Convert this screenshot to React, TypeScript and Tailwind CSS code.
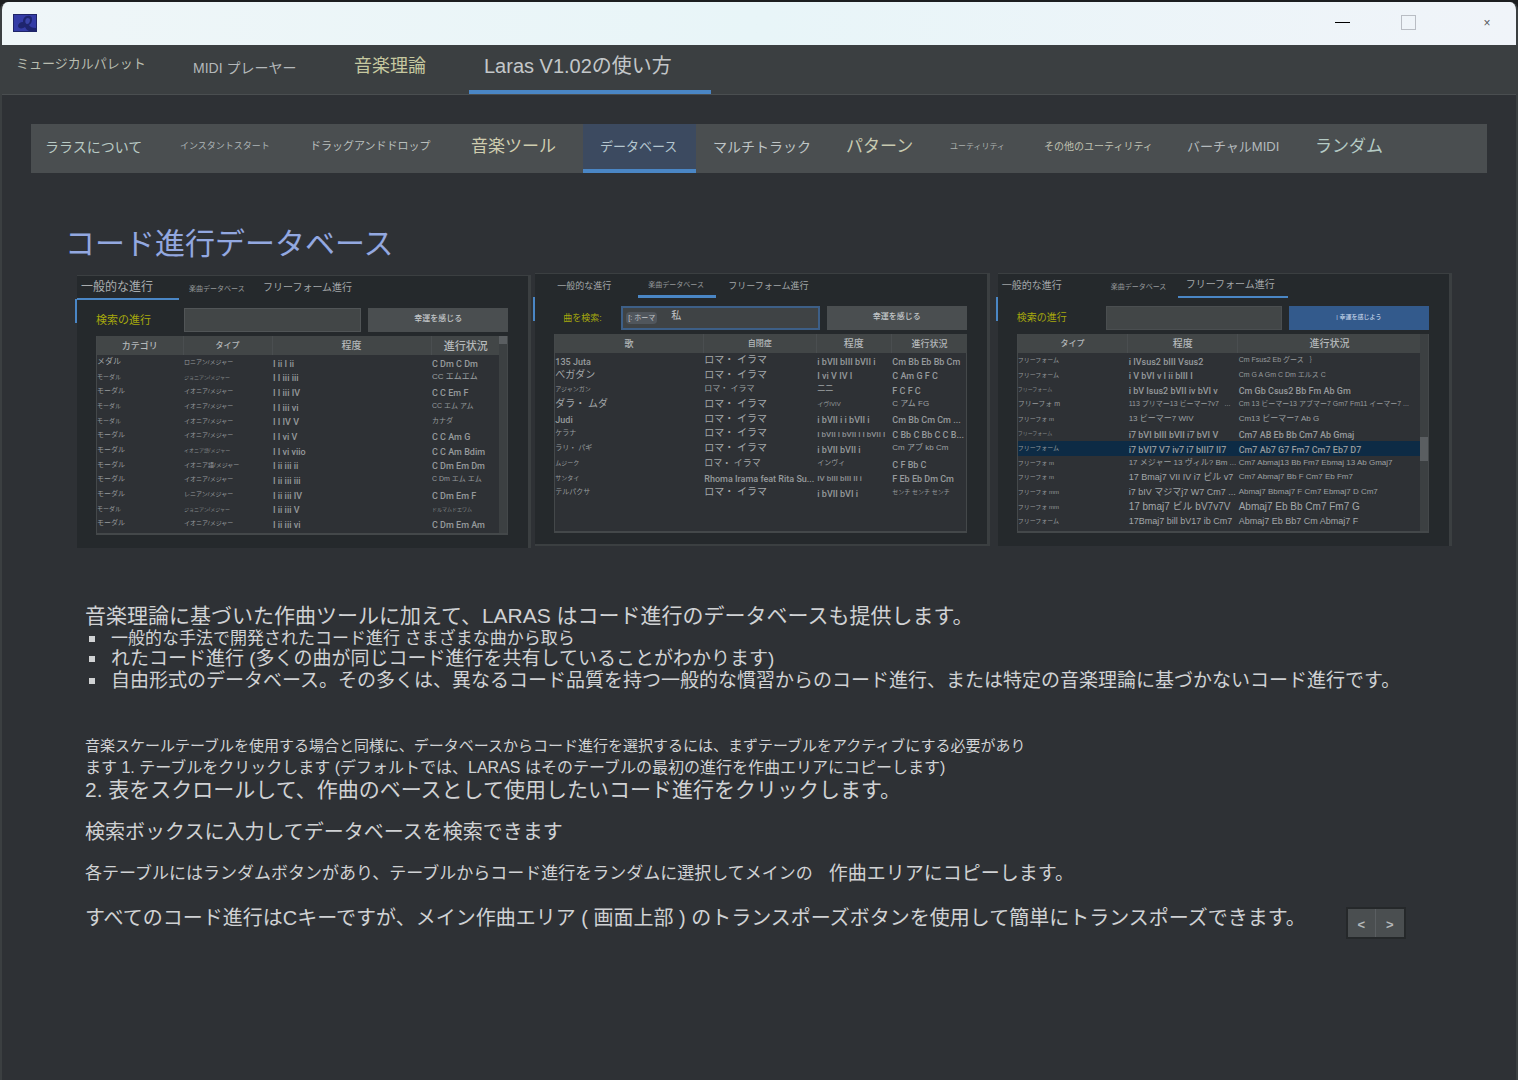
import type { ReactNode } from 'react';

type Cell = { text: string; cls: string };
type Row = Cell[];

const mainTabs = [
  { label: 'ミュージカルパレット', cls: 'w-[177px] pb-3 text-[13px] text-[#b9bdb0]' },
  { label: 'MIDI プレーヤー', cls: 'w-[161px] pb-1 text-[14px] text-[#b4b8ba]' },
  { label: '音楽理論', cls: 'w-[115px] pb-2 text-[18px] text-[#c6c8a0]' },
  { label: 'Laras V1.02の使い方', cls: 'w-[242px] pb-1 text-[20px] text-[#c3c7c9] border-b-4 border-[#4a86c5]', active: true },
];

const helpTabs = [
  { label: 'ララスについて', cls: 'w-[135px] text-[14px] text-[#b9cbc5]' },
  { label: 'インスタントスタート', cls: 'w-[130px] text-[9px] text-[#aeb6b8]' },
  { label: 'ドラッグアンドドロップ', cls: 'w-[161px] text-[11px] text-[#b9bfbd]' },
  { label: '音楽ツール', cls: 'w-[126px] text-[17px] text-[#cfcdaf]' },
  { label: 'データベース', cls: 'w-[113px] pl-[17px] text-[13px] text-[#b4c6cf] bg-[#3c4a60] border-b-4 border-[#4a86c5]', active: true },
  { label: 'マルチトラック', cls: 'w-[136px] pl-[17px] text-[14px] text-[#bfc5c6]' },
  { label: 'パターン', cls: 'w-[104px] text-[17px] text-[#c8cab0]' },
  { label: 'ユーティリティ', cls: 'w-[94px] text-[8px] text-[#aab0ae]' },
  { label: 'その他のユーティリティ', cls: 'w-[143px] text-[10px] text-[#c0c2b2]' },
  { label: 'バーチャルMIDI', cls: 'w-[128px] text-[13px] text-[#b4babd]' },
  { label: 'ランダム', cls: 'w-[95px] text-[17px] text-[#b5cbc5]' },
];

const j5 = (text: string): Cell => ({ text, cls: 'align-top leading-[14px] text-[5px] text-[#85898b]' });
const j6 = (text: string): Cell => ({ text, cls: 'align-top leading-[14px] text-[6px] text-[#979b9d]' });
const j7 = (text: string): Cell => ({ text, cls: 'align-top leading-[14px] text-[7px] text-[#989c9e]' });
const j8 = (text: string): Cell => ({ text, cls: 'align-top leading-[14px] text-[8px] text-[#9ea2a4]' });
const j9 = (text: string): Cell => ({ text, cls: 'align-top leading-[14px] text-[9px] text-[#a3a7a9]' });
const j10 = (text: string): Cell => ({ text, cls: 'align-top leading-[14px] text-[10px] text-[#a3a7a9]' });
// chord names and degrees
const ch = (text: string): Cell => ({ text, cls: 'align-bottom leading-[12px] font-[Roboto] font-medium text-[9px] text-[#969a9c]' });
const dg = (text: string): Cell => ({ text, cls: 'align-bottom leading-[12px] font-[Roboto] font-medium text-[8px] text-[#8f9395]' });

const commonRows: Row[] = [
  [j8('メダル'), j6('ロニアン/メジャー'), ch('I ii I ii'), ch('C Dm C Dm')],
  [j6('モーダル'), j5('ジョニアン/メジャー'), ch('I I iii iii'), j8('CC エムエム')],
  [j7('モーダル'), j6('イオニア/メジャー'), ch('I I iii IV'), ch('C C Em F')],
  [j6('モーダル'), j6('イオニア/メジャー'), ch('I I iii vi'), j7('CC エム アム')],
  [j6('モーダル'), j6('イオニア/メジャー'), ch('I I IV V'), j7('カナダ')],
  [j7('モーダル'), j6('イオニア/メジャー'), ch('I I vi V'), ch('C C Am G')],
  [j7('モーダル'), j5('イオニア語/メジャー'), ch('I I vi viio'), ch('C C Am Bdim')],
  [j7('モーダル'), j6('イオニア語/メジャー'), ch('I ii iii ii'), ch('C Dm Em Dm')],
  [j7('モーダル'), j6('イオニア/メジャー'), ch('I ii iii iii'), j7('C Dm エム エム')],
  [j7('モーダル'), j6('レニアン/メジャー'), ch('I ii iii IV'), ch('C Dm Em F')],
  [j6('モーダル'), j5('ジョニアン/メジャー'), ch('I ii iii V'), j5('ドルマムドエワム')],
  [j7('モーダル'), j6('イオニア/メジャー'), ch('I ii iii vi'), ch('C Dm Em Am')],
];

const songRows: Row[] = [
  [ch('135 Juta'), j10('ロマ・ イラマ'), ch('i bVII bIII bVII i'), ch('Cm Bb Eb Bb Cm')],
  [j10('べガダン'), j10('ロマ・ イラマ'), ch('I vi V IV I'), ch('C Am G F C')],
  [j6('アジャンガン'), j8('ロマ・ イラマ'), j8('二二'), ch('F C F C')],
  [j10('ダラ・ ムダ'), j10('ロマ・ イラマ'), j6('イヴIVIV'), j8('C アム FG')],
  [ch('Judi'), j10('ロマ・ イラマ'), ch('i bVII i i bVII i'), ch('Cm Bb Cm Cm ...')],
  [j7('ケラナ'), j10('ロマ・ イラマ'), dg('I bVII I bVII I I bVII I'), ch('C Bb C Bb C C B...')],
  [j7('ラリ・ パギ'), j10('ロマ・ イラマ'), ch('i bVII bVII i'), j8('Cm アブ kb Cm')],
  [j6('ムジーク'), j9('ロマ・ イラマ'), j7('インヴィ'), ch('C F Bb C')],
  [j6('サンタイ'), ch('Rhoma Irama feat Rita Su...'), dg('IV bIII bIII II i'), ch('F Eb Eb Dm Cm')],
  [j7('テルパクサ'), j10('ロマ・ イラマ'), ch('i bVII bVI i'), j6('センチ センチ センチ')],
];

const freeRows: Row[] = [
  [j6('フリーフォーム'), ch('i IVsus2 bIII Vsus2'), j7('Cm Fsus2 Eb グース   ｝')],
  [j6('フリーフォーム'), ch('i V bVI v I ii bIII I'), j7('Cm G A Gm C Dm エルス C')],
  [j5('フリーフォーム'), ch('i bV Isus2 bVII iv bVI v'), ch('Cm Gb Csus2 Bb Fm Ab Gm')],
  [j7('フリーフォ m'), j7('113 プリマー13 ビーマー7v7   ...'), j7('Cm 13 ビーマー13 アブマー7 Gm7 Fm11 イーマー7 ...')],
  [j6('フリーフォ m'), j8('13 ビーマー7 WIV'), j8('Cm13 ビーマー7 Ab G')],
  [j5('フリーフォーム'), ch('i7 bVI bIII bVII i7 bVI V'), ch('Cm7 AB Eb Bb Cm7 Ab Gmaj')],
  [j6('フリーフォーム'), ch('i7 bVI7 V7 iv7 i7 bIII7 II7'), ch('Cm7 Ab7 G7 Fm7 Cm7 Eb7 D7')],
  [j6('フリーフォ m'), j8('17 メジャー 13 ヴィル? Bm ...'), j8('Cm7 Abmaj13 Bb Fm7 Ebmaj 13 Ab Gmaj7')],
  [j6('フリーフォ m'), j9('17 Bmaj7 VII IV i7 ビル v7'), j8('Cm7 Abmaj7 Bb F Cm7 Eb Fm7')],
  [j6('フリーフォ mm'), j9('i7 bIV マジマj7 W7 Cm7 ...'), j8('Abmaj7 Bbmaj7 F Cm7 Ebmaj7 D Cm7')],
  [j6('フリーフォ mm'), j10('17 bmaj7 ビル bV7v7V'), j10('Abmaj7 Eb Bb Cm7 Fm7 G')],
  [j6('フリーフォーム'), j9('17Bmaj7 bill bV17 ib Cm7'), j9('Abmaj7 Eb Bb7 Cm Abmaj7 F')],
];

type TableProps = {
  head: Cell[];
  cols: string[];
  rows: Row[];
  height: string;
  selected?: number;
  thumb?: string;
};

const ChordTable = ({ head, cols, rows, height, selected, thumb }: TableProps) => (
  <div className="flex h-[199px] border-r border-b-2 border-l border-[#44484a] bg-[#2e3135]">
    <div className="min-w-0 flex-1">
      <table className={`w-full table-fixed border-collapse ${height}`}>
        <colgroup>
          {cols.map((c, i) => (
            <col key={i} className={c} />
          ))}
        </colgroup>
        <thead>
          <tr className="h-[19px] bg-[#424647]">
            {head.map((h) => (
              <th key={h.text} className={`border-r border-[#4a4e50] p-0 leading-[18px] font-medium last:border-r-0 ${h.cls}`}>
                {h.text}
              </th>
            ))}
          </tr>
        </thead>
        <tbody>
          {rows.map((row, i) => (
            <tr key={i} className={i === selected ? 'bg-[#0d2b45]' : ''}>
              {row.map((cell, k) => (
                <td key={k} className={`p-0 whitespace-pre ${k > 0 ? 'pl-[1px]' : ''} ${cell.cls}`}>
                  {cell.text}
                </td>
              ))}
            </tr>
          ))}
        </tbody>
      </table>
    </div>
    {thumb && (
      <div className="w-2 shrink-0 bg-[#3c4042]">
        <div className={`w-full bg-[#5a5e61] ${thumb}`}></div>
      </div>
    )}
  </div>
);

type PanelProps = {
  className?: string;
  tabs: { label: string; cls: string }[];
  children: ReactNode;
};

const Panel = ({ className = '', tabs, children }: PanelProps) => (
  <section className={`relative h-[273px] min-w-0 flex-1 border-t border-r-3 border-[#3b3f41] bg-[#25292c] ${className}`}>
    <span className="absolute top-[23px] -left-[2px] h-6 w-[2px] bg-[#4a86c5]"></span>
    <div className="flex h-6 items-stretch">
      {tabs.map((t) => (
        <button key={t.label} className={`shrink-0 text-left leading-none whitespace-nowrap ${t.cls}`}>
          {t.label}
        </button>
      ))}
    </div>
    <div className="pt-2 pr-5 pl-[19px]">{children}</div>
  </section>
);

const luckyBtn = 'h-6 w-[140px] shrink-0 pb-[2px] leading-none font-medium';

export default function App() {
  return (
    <div className="min-h-screen bg-[#1c1e20] pt-[2px] font-['Liberation_Sans','Noto_Sans_CJK_JP',sans-serif]">
      <div className="flex min-h-[calc(100vh-2px)] flex-col overflow-hidden rounded-t-lg border-r-2 border-l-2 border-[#3b3f41] bg-[#2e3135]">
        {/* Title bar */}
        <header className="flex h-[43px] shrink-0 items-center justify-between bg-gradient-to-r from-[#eff6f8] via-[#e8f5f8] to-[#f0f4f9] pr-5 pb-[2px] pl-[11px]">
          <svg width="24" height="18" viewBox="0 0 24 18">
            <rect width="24" height="18" fill="#1f2568" />
            <rect x="1" y="1" width="22" height="16" fill="#343ca6" />
            <path d="M11 4c2-3 8-3 8 1 0 3-1 5-3 6 1 2 3 3 7 3v3h-7c-2-1-3-2-4-4-2 2-7 2-7-1 0-2 2-4 5-4 0-1 0-3 1-4z" fill="#1e256f" />
            <path d="M13 5c1-2 4-1 4 1s-1 4-3 4-2-4-1-5z" fill="#3a44a8" />
          </svg>
          <div className="flex items-center gap-[50px]">
            <button aria-label="最小化" className="h-4 w-4">
              <span className="block h-[1px] w-[15px] bg-black"></span>
            </button>
            <button aria-label="最大化" className="h-[15px] w-[15px] border border-[#b9bdc4]"></button>
            <button aria-label="閉じる" className="w-[30px] pl-3 text-[12px] leading-none text-[#55585c]">×</button>
          </div>
        </header>

        {/* Main tabs */}
        <nav className="flex h-[50px] shrink-0 border-b border-[#4a4e50] bg-[#3b3f41] pl-[14px]">
          {mainTabs.map((t) => (
            <button
              key={t.label}
              className={`shrink-0 text-left leading-none whitespace-nowrap ${t.active ? 'pl-[15px]' : ''} ${t.cls}`}
            >
              {t.label}
            </button>
          ))}
        </nav>

        <main className="px-[29px] pt-[29px]">
          {/* Help topics */}
          <nav className="flex h-[49px] overflow-hidden bg-[#4a4e50]">
            {helpTabs.map((t) => (
              <button
                key={t.label}
                className={`shrink-0 text-left leading-none whitespace-nowrap ${t.active ? '' : 'pb-1 pl-[14px]'} ${t.cls}`}
              >
                {t.label}
              </button>
            ))}
          </nav>

          <div className="pr-[35px] pl-[34px]">
            <h1 className="mt-[51px] text-[30px] leading-[40px] text-[#93a8e0]">コード進行データベース</h1>

            <div className="flex pt-[9px] pl-3">
              <Panel
                className="mt-[2px] mr-1"
                tabs={[
                  { label: '一般的な進行', cls: 'w-[102px] border-b-2 border-[#4a86c5] pl-1 text-[12px] text-[#a9adaf]' },
                  { label: '楽曲データベース', cls: 'w-[76px] pl-[10px] text-[7px] text-[#94989a]' },
                  { label: 'フリーフォーム進行', cls: 'pl-2 text-[10px] text-[#a3a7a9]' },
                ]}
              >
                <div className="flex h-[28px]">
                  <label htmlFor="find-common" className="w-[88px] text-[11px] leading-6 text-[#a5a80c]">検索の進行</label>
                  <input id="find-common" className="mr-[7px] h-6 min-w-0 flex-1 border border-[#515557] bg-[#424647]" />
                  <button className={`${luckyBtn} bg-[#4a4e50] text-[8px] text-[#c4c8ca]`}>幸運を感じる</button>
                </div>
                <ChordTable
                  cols={['w-[86px]', 'w-[89px]', 'w-[159px]', 'w-[69px]']}
                  head={[
                    { text: 'カテゴリ', cls: 'text-[9px] text-[#b4b8ba]' },
                    { text: 'タイプ', cls: 'text-[8px] text-[#b4b8ba]' },
                    { text: '程度', cls: 'text-[10px] text-[#b4b8ba]' },
                    { text: '進行状況', cls: 'text-[11px] text-[#b4b8ba]' },
                  ]}
                  rows={commonRows}
                  height="h-[195px]"
                  thumb="h-2"
                />
              </Panel>

              <Panel
                className="mr-2 border-b-2"
                tabs={[
                  { label: '一般的な進行', cls: 'w-[103px] pl-[22px] text-[9px] text-[#a3a7a9]' },
                  { label: '楽曲データベース', cls: 'w-[78px] border-b-3 border-[#4a86c5] pl-[10px] text-[7px] text-[#94989a]' },
                  { label: 'フリーフォーム進行', cls: 'pl-3 text-[9px] text-[#a3a7a9]' },
                ]}
              >
                <div className="flex h-[28px]">
                  <label htmlFor="find-song" className="w-[67px] pl-[9px] text-[9px] leading-6 text-[#a5a80c]">曲を検索:</label>
                  <div className="mr-[7px] flex h-6 min-w-0 flex-1 items-center border-2 border-[#3d5f87] bg-[#3f4345] pl-[3px]">
                    <span className="rounded-sm bg-[#50565c] px-[2px] text-[7px] leading-3 whitespace-nowrap text-[#c4c8ca]">[: ホーマ</span>
                    <input id="find-song" defaultValue="私" className="h-5 min-w-0 flex-1 bg-transparent pb-2 pl-[14px] text-[10px] text-[#c4c8ca]" />
                  </div>
                  <button className={`${luckyBtn} bg-[#4a4e50] text-[8px] text-[#c4c8ca]`}>幸運を感じる</button>
                </div>
                <ChordTable
                  cols={['w-[148px]', 'w-[113px]', 'w-[75px]', 'w-[76px]']}
                  head={[
                    { text: '歌', cls: 'text-[9px] text-[#b4b8ba]' },
                    { text: '自閉症', cls: 'text-[8px] text-[#b4b8ba]' },
                    { text: '程度', cls: 'text-[10px] text-[#b4b8ba]' },
                    { text: '進行状況', cls: 'text-[9px] text-[#b4b8ba]' },
                  ]}
                  rows={songRows}
                  height="h-[166px]"
                />
              </Panel>

              <Panel
                tabs={[
                  { label: '一般的な進行', cls: 'w-[103px] pl-1 text-[10px] text-[#a3a7a9]' },
                  { label: '楽曲データベース', cls: 'w-[77px] pl-[10px] text-[7px] text-[#94989a]' },
                  { label: 'フリーフォーム進行', cls: 'w-[110px] border-b-2 border-[#4a86c5] pl-2 text-[10px] text-[#a3a7a9]' },
                ]}
              >
                <div className="flex h-[28px]">
                  <label htmlFor="find-free" className="w-[89px] text-[10px] leading-6 text-[#a5a80c]">検索の進行</label>
                  <input id="find-free" className="mr-[7px] h-6 min-w-0 flex-1 border border-[#4a4e50] bg-[#424647]" />
                  <button className={`${luckyBtn} bg-[#335a8c] text-[6px] text-[#c4d4e8]`}>| 幸運を感じよう</button>
                </div>
                <ChordTable
                  cols={['w-[110px]', 'w-[110px]', 'w-[183px]']}
                  head={[
                    { text: 'タイプ', cls: 'text-[8px] text-[#b4b8ba]' },
                    { text: '程度', cls: 'text-[10px] text-[#b4b8ba]' },
                    { text: '進行状況', cls: 'text-[10px] text-[#b4b8ba]' },
                  ]}
                  rows={freeRows}
                  height="h-[195px]"
                  selected={6}
                  thumb="mt-[103px] h-6"
                />
              </Panel>
            </div>

            {/* Description */}
            <div className="pt-[55px] pl-5 text-[#d0d2d4]">
              <p className="text-[21px] leading-[26px]">音楽理論に基づいた作曲ツールに加えて、LARAS はコード進行のデータベースも提供します。</p>
              <ul className="list-none">
                <li className="flex items-center text-[17px] leading-5">
                  <span className="mr-4 ml-1 h-[6px] w-[6px] shrink-0 bg-[#d0d2d4]"></span>
                  一般的な手法で開発されたコード進行 さまざまな曲から取ら
                </li>
                <li className="flex items-center text-[19px] leading-5">
                  <span className="mr-4 ml-1 h-[6px] w-[6px] shrink-0 bg-[#d0d2d4]"></span>
                  れたコード進行 (多くの曲が同じコード進行を共有していることがわかります)
                </li>
                <li className="flex items-center text-[19px] leading-6">
                  <span className="mr-4 ml-1 h-[6px] w-[6px] shrink-0 bg-[#d0d2d4]"></span>
                  自由形式のデータベース。その多くは、異なるコード品質を持つ一般的な慣習からのコード進行、または特定の音楽理論に基づかないコード進行です。
                </li>
              </ul>

              <p className="mt-[42px] text-[15px] leading-[22px]">
                音楽スケールテーブルを使用する場合と同様に、データベースからコード進行を選択するには、まずテーブルをアクティブにする必要があり
              </p>
              <p className="text-[16px] leading-[22px]">
                ます 1. テーブルをクリックします (デフォルトでは、LARAS はそのテーブルの最初の進行を作曲エリアにコピーします)
              </p>
              <p className="text-[21px] leading-[22px]">2. 表をスクロールして、作曲のベースとして使用したいコード進行をクリックします。</p>

              <p className="mt-5 text-[20px] leading-[22px]">検索ボックスに入力してデータベースを検索できます</p>

              <p className="mt-5 flex items-center text-[17px] leading-[22px]">
                各テーブルにはランダムボタンがあり、テーブルからコード進行をランダムに選択してメインの
                <span className="ml-4 text-[19px]">作曲エリアにコピーします。</span>
              </p>

              <div className="mt-[22px] flex items-start">
                <p className="text-[20px] leading-[22px]">
                  すべてのコード進行はCキーですが、メイン作曲エリア ( 画面上部 ) のトランスポーズボタンを使用して簡単にトランスポーズできます。
                </p>
                <div className="ml-10 flex shrink-0 border-2 border-[#25282a] text-[13px] text-[#b4b8ba]">
                  <button aria-label="前へ" className="h-7 w-7 border-r border-[#5a5e61] bg-[#4a4e50] pt-1 font-bold">&lt;</button>
                  <button aria-label="次へ" className="h-7 w-7 bg-[#4a4e50] pt-1 font-bold">&gt;</button>
                </div>
              </div>
            </div>
          </div>
        </main>
      </div>
    </div>
  );
}
